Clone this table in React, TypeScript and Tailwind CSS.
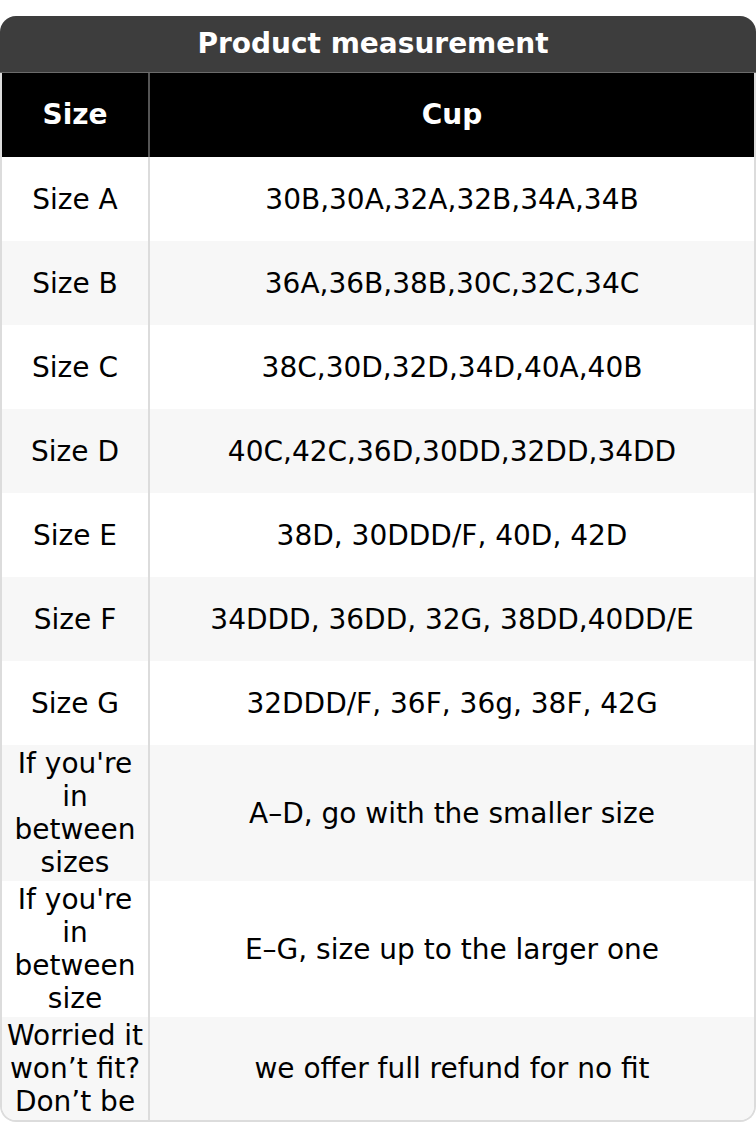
const rows: [string, string][] = [
  ["Size A", "30B,30A,32A,32B,34A,34B"],
  ["Size B", "36A,36B,38B,30C,32C,34C"],
  ["Size C", "38C,30D,32D,34D,40A,40B"],
  ["Size D", "40C,42C,36D,30DD,32DD,34DD"],
  ["Size E", "38D, 30DDD/F, 40D, 42D"],
  ["Size F", "34DDD, 36DD, 32G, 38DD,40DD/E"],
  ["Size G", "32DDD/F, 36F, 36g, 38F, 42G"],
  ["If you're in between sizes", "A\u2013D, go with the smaller size"],
  ["If you're in between size", "E\u2013G, size up to the larger one"],
  ["Worried it won\u2019t fit? Don\u2019t be", "we offer full refund for no fit"],
];

export default function App() {
  return (
    <div
      className="w-[756px] pt-4 bg-white text-black"
      style={{ fontFamily: '"DejaVu Sans", Verdana, sans-serif' }}
    >
      {/* title */}
      <div className="h-[57px] flex items-center justify-center pr-[10px] rounded-t-[16px] bg-[#3d3d3d] border-b border-[#6b6b6b]">
        <span className="text-[28px] font-bold text-white leading-none">Product measurement</span>
      </div>

      <div className="border-2 border-t-0 border-[#dcdcdc] rounded-b-[16px] overflow-hidden">
        {/* header */}
        <div className="grid grid-cols-[148px_1fr] h-[84px] bg-black text-white text-[28px] font-bold">
          <div className="flex items-center justify-center border-r-2 border-[#555]">Size</div>
          <div className="flex items-center justify-center">Cup</div>
        </div>

        {rows.map(([size, cup], i) => (
          <div
            key={i}
            className={`grid grid-cols-[148px_1fr] min-h-[84px] text-[28px] leading-[33px] ${
              i % 2 === 1 ? "bg-[#f7f7f7]" : "bg-white"
            }`}
          >
            <div className="flex items-center justify-center text-center py-[2px] border-r-2 border-[#dcdcdc]">
              {size}
            </div>
            <div className="flex items-center justify-center text-center py-[2px]">{cup}</div>
          </div>
        ))}
      </div>
    </div>
  );
}
